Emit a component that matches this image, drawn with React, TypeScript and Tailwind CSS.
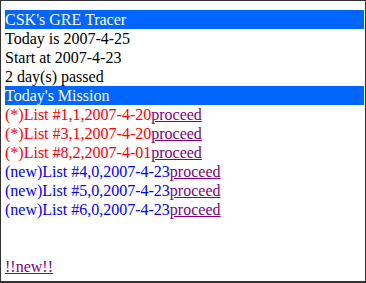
const missions = [
  { mark: "(*)", text: "List #1,1,2007-4-20", color: "text-[#ff0000]" },
  { mark: "(*)", text: "List #3,1,2007-4-20", color: "text-[#ff0000]" },
  { mark: "(*)", text: "List #8,2,2007-4-01", color: "text-[#ff0000]" },
  { mark: "(new)", text: "List #4,0,2007-4-23", color: "text-[#0000ff]" },
  { mark: "(new)", text: "List #5,0,2007-4-23", color: "text-[#0000ff]" },
  { mark: "(new)", text: "List #6,0,2007-4-23", color: "text-[#0000ff]" },
];

const App = () => {
  return (
    <div className="w-[366px] h-[283px] bg-white border border-b-2 border-[#333333] pt-[9px] pl-[4px] pr-[1px] font-['Liberation_Serif',serif] text-[16px] leading-[19px] text-black overflow-hidden">
      <div className="bg-[#0066ff] text-white h-[19px]">CSK's GRE Tracer</div>
      <div>Today is 2007-4-25</div>
      <div>Start at 2007-4-23</div>
      <div>2 day(s) passed</div>
      <div className="bg-[#0066ff] text-white h-[19px]">Today's Mission</div>
      {missions.map((m, i) => (
        <div key={i} className={m.color}>
          {m.mark}
          {m.text}
          <a href="#" className="text-[#800080] underline">
            proceed
          </a>
        </div>
      ))}
      <div className="h-[38px]" />
      <div>
        <a href="#" className="text-[#800080] underline">
          !!new!!
        </a>
      </div>
    </div>
  );
};

export default App;
